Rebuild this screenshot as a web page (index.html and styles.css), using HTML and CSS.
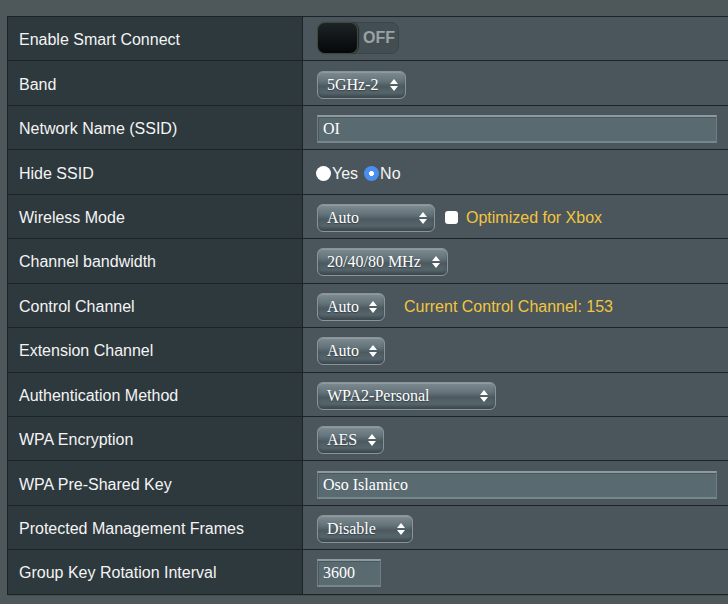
FILE: index.html
```html
<!DOCTYPE html>
<html>
<head>
<meta charset="utf-8">
<link rel="stylesheet" href="styles.css">
</head>
<body>
<div class="table">
  <div class="row">
    <div class="label">Enable Smart Connect</div>
    <div class="value">
      <div class="toggle"><div class="knob"></div><span class="off">OFF</span></div>
    </div>
  </div>
  <div class="row">
    <div class="label">Band</div>
    <div class="value">
      <div class="select w-band"><span>5GHz-2</span><svg class="arrows" width="8" height="12" viewBox="0 0 8 12"><path d="M4 0L8 5H0Z M0 7H8L4 12Z" fill="#fff"/></svg></div>
    </div>
  </div>
  <div class="row">
    <div class="label">Network Name (SSID)</div>
    <div class="value">
      <div class="input w-full">OI</div>
    </div>
  </div>
  <div class="row">
    <div class="label">Hide SSID</div>
    <div class="value">
      <span class="radio"></span><span class="rlabel">Yes</span>
      <span class="radio on"></span><span class="rlabel">No</span>
    </div>
  </div>
  <div class="row">
    <div class="label">Wireless Mode</div>
    <div class="value">
      <div class="select w-mode"><span>Auto</span><svg class="arrows" width="8" height="12" viewBox="0 0 8 12"><path d="M4 0L8 5H0Z M0 7H8L4 12Z" fill="#fff"/></svg></div>
      <span class="checkbox"></span><span class="hint">Optimized for Xbox</span>
    </div>
  </div>
  <div class="row">
    <div class="label">Channel bandwidth</div>
    <div class="value">
      <div class="select w-bw"><span>20/40/80 MHz</span><svg class="arrows" width="8" height="12" viewBox="0 0 8 12"><path d="M4 0L8 5H0Z M0 7H8L4 12Z" fill="#fff"/></svg></div>
    </div>
  </div>
  <div class="row">
    <div class="label">Control Channel</div>
    <div class="value">
      <div class="select w-auto"><span>Auto</span><svg class="arrows" width="8" height="12" viewBox="0 0 8 12"><path d="M4 0L8 5H0Z M0 7H8L4 12Z" fill="#fff"/></svg></div>
      <span class="hint channel">Current Control Channel: 153</span>
    </div>
  </div>
  <div class="row">
    <div class="label">Extension Channel</div>
    <div class="value">
      <div class="select w-auto"><span>Auto</span><svg class="arrows" width="8" height="12" viewBox="0 0 8 12"><path d="M4 0L8 5H0Z M0 7H8L4 12Z" fill="#fff"/></svg></div>
    </div>
  </div>
  <div class="row">
    <div class="label">Authentication Method</div>
    <div class="value">
      <div class="select w-auth"><span>WPA2-Personal</span><svg class="arrows" width="8" height="12" viewBox="0 0 8 12"><path d="M4 0L8 5H0Z M0 7H8L4 12Z" fill="#fff"/></svg></div>
    </div>
  </div>
  <div class="row">
    <div class="label">WPA Encryption</div>
    <div class="value">
      <div class="select w-aes"><span>AES</span><svg class="arrows" width="8" height="12" viewBox="0 0 8 12"><path d="M4 0L8 5H0Z M0 7H8L4 12Z" fill="#fff"/></svg></div>
    </div>
  </div>
  <div class="row">
    <div class="label">WPA Pre-Shared Key</div>
    <div class="value">
      <div class="input w-full">Oso Islamico</div>
    </div>
  </div>
  <div class="row">
    <div class="label">Protected Management Frames</div>
    <div class="value">
      <div class="select w-pmf"><span>Disable</span><svg class="arrows" width="8" height="12" viewBox="0 0 8 12"><path d="M4 0L8 5H0Z M0 7H8L4 12Z" fill="#fff"/></svg></div>
    </div>
  </div>
  <div class="row">
    <div class="label">Group Key Rotation Interval</div>
    <div class="value">
      <div class="input w-num">3600</div>
    </div>
  </div>
</div>
</body>
</html>
```

FILE: styles.css
```css
html, body {
  margin: 0;
  padding: 0;
  background: #4e5759;
  overflow: hidden;
  width: 728px;
  height: 604px;
}

.table {
  margin: 16px 0 0 7px;
  width: 721px;
  border-top: 1px solid #1d2326;
  border-left: 1px solid #1d2326;
  font-family: "Liberation Sans", Arial, sans-serif;
  font-size: 16px;
  color: #f4f4f4;
}

.row {
  display: grid;
  grid-template-columns: 294px 1fr;
  height: 44.45px;
  box-sizing: border-box;
  border-bottom: 1px solid #1d2326;
  box-shadow: 0 1px 0 rgba(0,0,0,0.12);
}

.label {
  background: #2e393e;
  display: flex;
  align-items: center;
  padding-left: 11px;
  padding-top: 3px;
}

.value {
  background: #4a565c;
  border-left: 1px solid #1d2326;
  display: flex;
  align-items: center;
  padding-left: 13px;
  padding-top: 3px;
}

/* toggle */
.toggle {
  width: 82px;
  height: 32px;
  box-sizing: border-box;
  border-radius: 8px;
  background: #434e53;
  border: 1px solid #3a4449;
  display: flex;
  align-items: center;
  margin-left: 1px;
  margin-top: -5px;
}
.knob {
  width: 41px;
  height: 32px;
  margin-left: -1px;
  box-sizing: border-box;
  border-radius: 8px;
  background: linear-gradient(#1d2326, #050708);
  border: 1px solid #3d4a3a;
  box-shadow: 1px 0 1px rgba(0,0,0,0.5);
}
.off {
  font-weight: bold;
  color: #9aa2a5;
  margin-left: 5px;
  font-size: 16px;
}

/* select */
.select {
  height: 28px;
  box-sizing: border-box;
  border: 1px solid #88949a;
  border-radius: 6px;
  background: linear-gradient(#7e8b90 0%, #65747b 35%, #4c5a60 55%, #56656c 80%, #4a585e 100%);
  box-shadow: inset 0 -3px 3px rgba(0,0,0,0.18), inset 0 1px 0 rgba(255,255,255,0.15);
  display: flex;
  align-items: center;
  justify-content: space-between;
  padding: 0 7px 0 9px;
  font-family: "Liberation Serif", "Times New Roman", serif;
  font-size: 16px;
  color: #fff;
  text-shadow: 0 1px 1px rgba(0,0,0,0.35);
  margin-left: 1px;
}
.arrows { flex: none; }
.w-band { width: 89px; }
.w-mode { width: 118px; }
.w-bw { width: 131px; }
.w-auto { width: 68px; }
.w-auth { width: 179px; }
.w-aes { width: 67px; }
.w-pmf { width: 96px; }

/* text input */
.input {
  height: 28px;
  box-sizing: border-box;
  background: #5a6a71;
  border: 1px solid #6f7e84;
  border-top: 2px solid #8c9aa0;
  border-bottom: 2px solid #76868c;
  box-shadow: inset 1px 1px 0 #4a585e;
  display: flex;
  align-items: center;
  padding-left: 5px;
  font-family: "Liberation Serif", "Times New Roman", serif;
  font-size: 16px;
  color: #fff;
  margin-left: 1px;
}
.w-full { width: 400px; }
.w-num { width: 64px; }

/* radio */
.radio {
  width: 15px;
  height: 15px;
  border-radius: 50%;
  background: #fff;
  box-sizing: border-box;
  flex: none;
  margin-left: 0;
}
.radio.on {
  background: radial-gradient(circle, #fff 0 2.2px, #4a8ef0 2.8px);
  margin-left: 6px;
}
.rlabel {
  margin-left: 1px;
}

/* checkbox */
.checkbox {
  width: 13px;
  height: 13px;
  border-radius: 3px;
  background: #fff;
  margin-left: 10px;
  flex: none;
}
.hint {
  color: #f3c53e;
  margin-left: 8px;
}
.hint.channel {
  margin-left: 19px;
}
```
